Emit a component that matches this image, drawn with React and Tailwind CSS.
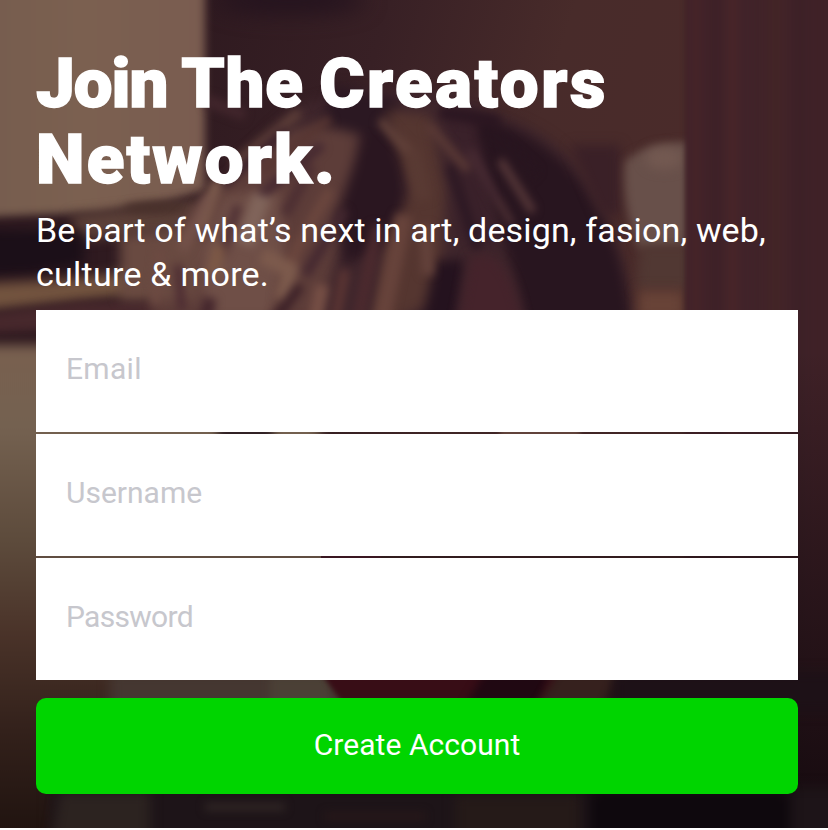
// Broad tonal masses of the hair: [path, colour]
const masses = [
  ["M215 190 L290 130 L360 120 L350 200 L320 320 H150 L165 235Z", "#5d3d39"],
  ["M225 195 L280 190 L285 250 L270 320 H205 L200 250Z", "#6f4f47"],
  ["M120 235 L200 225 L195 300 L120 300Z", "#694a41"],
  ["M335 85 L400 100 L385 140 L320 125Z", "#2b1822"],
  ["M365 130 L400 140 L405 200 L385 245 L345 265 L335 220Z", "#2a1620"],
  ["M385 110 L430 115 L445 190 L440 300 L370 330 L385 250 L410 190Z", "#553630"],
  ["M445 110 L475 110 L490 200 L500 250 L460 240Z", "#3a212a"],
  ["M435 260 L465 260 L455 330 H420Z", "#24121e"],
];

// Individual locks over the masses: [path, colour, width]
const strands = [
  ["M205 100 L245 115", "#42262c", 12],
  ["M300 112 L232 165", "#5f4039", 9],
  ["M330 118 L262 172", "#573632", 9],
  ["M285 130 L222 185", "#39202a", 8],
  ["M322 145 L255 200", "#432730", 9],
  ["M218 180 L200 230", "#7b5a4c", 13],
  ["M208 195 L182 250", "#74524a", 10],
  ["M262 195 L245 245", "#80645a", 18],
  ["M238 205 L222 255", "#4f3034", 9],
  ["M330 190 L296 250 L285 290", "#6c473e", 10],
  ["M345 210 L305 275", "#442830", 10],
  ["M312 165 L285 215", "#4c2e32", 10],
  ["M220 245 L212 275", "#7d5946", 12],
  ["M262 255 L290 270 L282 300", "#7c5a4c", 16],
  ["M178 265 L182 310", "#4b2a31", 8],
  ["M160 250 L155 305", "#6d4a42", 9],
  ["M210 298 L204 325", "#45272d", 14],
  ["M300 285 L275 320", "#3b2027", 10],
  ["M322 285 L315 320", "#764f45", 13],
  ["M345 270 L335 320", "#5b3533", 10],
  ["M378 225 L358 320", "#4c2a2e", 12],
  ["M380 120 L412 155", "#62423a", 9],
  ["M428 125 L468 170", "#5c3b36", 8],
  ["M412 150 L424 200", "#593a33", 16],
  ["M404 215 L382 320", "#67433b", 17],
  ["M425 225 L428 275", "#64423b", 12],
  ["M450 165 L478 250", "#2c1823", 9],
  ["M470 150 L500 205", "#482b33", 8],
  ["M500 160 L533 212", "#573839", 8],
  ["M498 200 L512 225", "#4f3135", 7],
  ["M485 130 L535 175", "#28151f", 13],
  ["M440 112 L500 122", "#2b1621", 12],
];

const curtain = [
  [692, 8, "#472329"],
  [710, 11, "#3e2127"],
  [728, 9, "#492529"],
  [744, 15, "#412329"],
  [770, 12, "#432526"],
  [792, 16, "#3d2127"],
  [812, 20, "#3f2127"],
];

function Blur({ id, amount }) {
  return (
    <filter id={id} x="-50" y="-50" width="950" height="950" filterUnits="userSpaceOnUse" colorInterpolationFilters="sRGB">
      <feGaussianBlur stdDeviation={amount} />
    </filter>
  );
}

function Backdrop() {
  return (
    <svg
      className="absolute inset-0 h-full w-full"
      viewBox="0 0 828 828"
      preserveAspectRatio="none"
      aria-hidden="true"
    >
      <defs>
        <linearGradient id="wall" x1="0" y1="0" x2="1" y2="0">
          <stop offset="0" stopColor="#755c4e" />
          <stop offset="0.5" stopColor="#7b6050" />
          <stop offset="1" stopColor="#7a5c50" />
        </linearGradient>
        <linearGradient id="room" x1="205" y1="0" x2="690" y2="150" gradientUnits="userSpaceOnUse">
          <stop offset="0" stopColor="#2f1a20" />
          <stop offset="0.35" stopColor="#382025" />
          <stop offset="0.7" stopColor="#482b2a" />
          <stop offset="1" stopColor="#4a2b2a" />
        </linearGradient>
        <linearGradient id="left" x1="0" y1="340" x2="0" y2="828" gradientUnits="userSpaceOnUse">
          <stop offset="0" stopColor="#79604f" />
          <stop offset="0.18" stopColor="#746150" />
          <stop offset="0.42" stopColor="#5c4a3b" />
          <stop offset="0.6" stopColor="#4a3329" />
          <stop offset="0.8" stopColor="#33211b" />
          <stop offset="1" stopColor="#211410" />
        </linearGradient>
        <linearGradient id="fade" x1="0" y1="0" x2="0" y2="1">
          <stop offset="0" stopColor="#12080d" stopOpacity="0" />
          <stop offset="0.5" stopColor="#12080d" stopOpacity="0.5" />
          <stop offset="1" stopColor="#0d060a" stopOpacity="0.88" />
        </linearGradient>
        <Blur id="s2" amount="2.5" />
        <Blur id="s3" amount="4" />
        <Blur id="s5" amount="6" />
        <Blur id="s9" amount="11" />
      </defs>

      <rect width="828" height="828" fill="url(#room)" />
      <ellipse cx="290" cy="0" rx="75" ry="14" fill="#24131e" filter="url(#s9)" />

      {/* head */}
      <path d="M300 105 C370 85 450 80 505 118 C580 140 605 205 622 260 C632 300 634 360 630 400 H180 C175 300 190 190 300 105Z" fill="#3f262c" filter="url(#s5)" />
      <path d="M450 112 C540 120 590 180 612 240 C632 290 634 360 630 400 H535 C530 300 500 220 450 112Z" fill="#28151f" filter="url(#s5)" />
      <path d="M570 145 H620 V215 H600Z" fill="#3a2027" filter="url(#s5)" />

      {/* window wall and sill */}
      <path d="M-40 -40 H205 V190 L165 202 L100 212 L-40 218 Z" fill="url(#wall)" filter="url(#s3)" />
      <path d="M70 215 L200 200 V230 L80 240Z" fill="#5b4038" filter="url(#s5)" />
      <ellipse cx="155" cy="208" rx="32" ry="6" fill="#49312b" filter="url(#s3)" />
      <path d="M-40 229 L20 230 L84 232 V264 L30 274 L-40 276Z" fill="#1b0f18" filter="url(#s5)" />
      <path d="M-40 285 L60 280 L160 268 V292 L-40 313Z" fill="#73543f" filter="url(#s5)" />
      <path d="M-40 318 L80 302 L160 300 V325 L40 330 L-40 334Z" fill="#47282c" filter="url(#s3)" />

      <g filter="url(#s5)">
        {masses.map(([d, color]) => (
          <path key={d} d={d} fill={color} />
        ))}
      </g>
      <g fill="none" filter="url(#s3)">
        {strands.map(([d, color, width]) => (
          <path key={d} d={d} stroke={color} strokeWidth={width} />
        ))}
      </g>
      <path d="M470 258 C495 245 515 270 525 340 H455Z" fill="#45232b" filter="url(#s5)" />

      {/* lamp behind the shoulder */}
      <path d="M625 162 C635 150 660 142 692 142 V247 L640 249 C632 235 622 200 625 162Z" fill="#68504a" filter="url(#s3)" />
      <ellipse cx="664" cy="158" rx="19" ry="11" fill="#735951" filter="url(#s5)" />
      <path d="M640 245 H692 V290 H636Z" fill="#513833" filter="url(#s5)" />
      <rect x="638" y="290" width="46" height="30" fill="#684337" filter="url(#s5)" />
      <rect x="685" y="-50" width="190" height="950" fill="#412329" filter="url(#s2)" />
      <g filter="url(#s3)">
        {curtain.map(([x, width, color]) => (
          <rect key={x} x={x} y="-50" width={width} height="950" fill={color} />
        ))}
      </g>

      {/* lower part of the room */}
      <rect x="200" y="350" width="640" height="500" fill="url(#fade)" />
      <path d="M-40 345 H320 V860 H-40Z" fill="url(#left)" filter="url(#s5)" />
      <rect x="218" y="428" width="55" height="12" fill="#24151d" filter="url(#s3)" />
      <rect x="36" y="555" width="285" height="4" fill="#604d41" />
      <rect x="321" y="555" width="60" height="4" fill="#3a1721" />
      <rect x="500" y="429" width="80" height="8" fill="#65473e" filter="url(#s2)" />
      <rect x="110" y="672" width="260" height="38" fill="#453731" filter="url(#s5)" />
      <rect x="270" y="675" width="60" height="34" fill="#4b4036" filter="url(#s3)" />
      <path d="M320 672 H565 L535 720 H355Z" fill="#380d16" filter="url(#s2)" />
      <path d="M485 672 H550 L535 715 H460Z" fill="#200812" filter="url(#s3)" />
      <path d="M558 672 H618 L600 710 H535Z" fill="#36211e" filter="url(#s3)" />
      <rect x="614" y="672" width="260" height="40" fill="#1d1117" filter="url(#s5)" />
      <path d="M50 787 H860 V870 H50Z" fill="#1d1418" filter="url(#s5)" />
      <path d="M60 792 H150 V850 H50Z" fill="#2c2320" filter="url(#s5)" />
      <rect x="205" y="803" width="80" height="8" fill="#2f2524" filter="url(#s3)" />
      <rect x="325" y="812" width="100" height="9" fill="#261719" filter="url(#s3)" />
      <rect x="455" y="795" width="125" height="50" fill="#251a18" filter="url(#s5)" />
      <rect x="590" y="790" width="200" height="60" fill="#0e080d" filter="url(#s5)" />
    </svg>
  );
}

const fields = [
  { label: "Email", type: "email", tracking: "tracking-[0.3px]" },
  { label: "Username", type: "text", tracking: "tracking-[0px]" },
  { label: "Password", type: "password", tracking: "tracking-[-0.7px]" },
];

export default function App() {
  return (
    <div className="h-[830px] w-[828px] bg-white font-['Roboto',sans-serif]">
      <main className="relative isolate h-[828px] overflow-hidden bg-[#35202a]">
        <Backdrop />
        <section className="relative flex h-full flex-col pr-[30px] pl-9">
          <h1 className="h-[204px] pt-[46px] text-[69px] leading-[76px] font-black whitespace-nowrap text-white [-webkit-text-stroke:1.5px_white]">
            <span className="block [word-spacing:-2.5px]">
              <span className="tracking-[-1px]">Join </span>
              <span className="tracking-[0.8px]">The </span>
              <span className="tracking-[2.6px]">Creators</span>
            </span>
            <span className="block tracking-[2.2px]">Network.</span>
          </h1>
          <p className="h-[106px] pt-[4px] text-[34px] leading-[44px] whitespace-nowrap text-white">
            <span className="block tracking-[0.15px]">Be part of what’s next in art, design, fasion, web,</span>
            <span className="block tracking-[0.25px]">culture &amp; more.</span>
          </p>
          <form className="flex flex-col" onSubmit={(e) => e.preventDefault()}>
            <div className="flex flex-col gap-0.5">
              {fields.map(({ label, type, tracking }) => (
                <input
                  key={label}
                  type={type}
                  placeholder={label}
                  aria-label={label}
                  className={`h-[122px] w-full bg-white px-[30px] pb-[5px] text-[30px] text-gray-800 outline-none placeholder:text-[#c7c7cd] ${tracking}`}
                />
              ))}
            </div>
            <button
              type="submit"
              className="mt-[18px] h-24 rounded-[10px] bg-[#00d500] pb-[4px] text-[30px] tracking-[0.05px] text-white"
            >
              Create Account
            </button>
          </form>
        </section>
      </main>
    </div>
  );
}
